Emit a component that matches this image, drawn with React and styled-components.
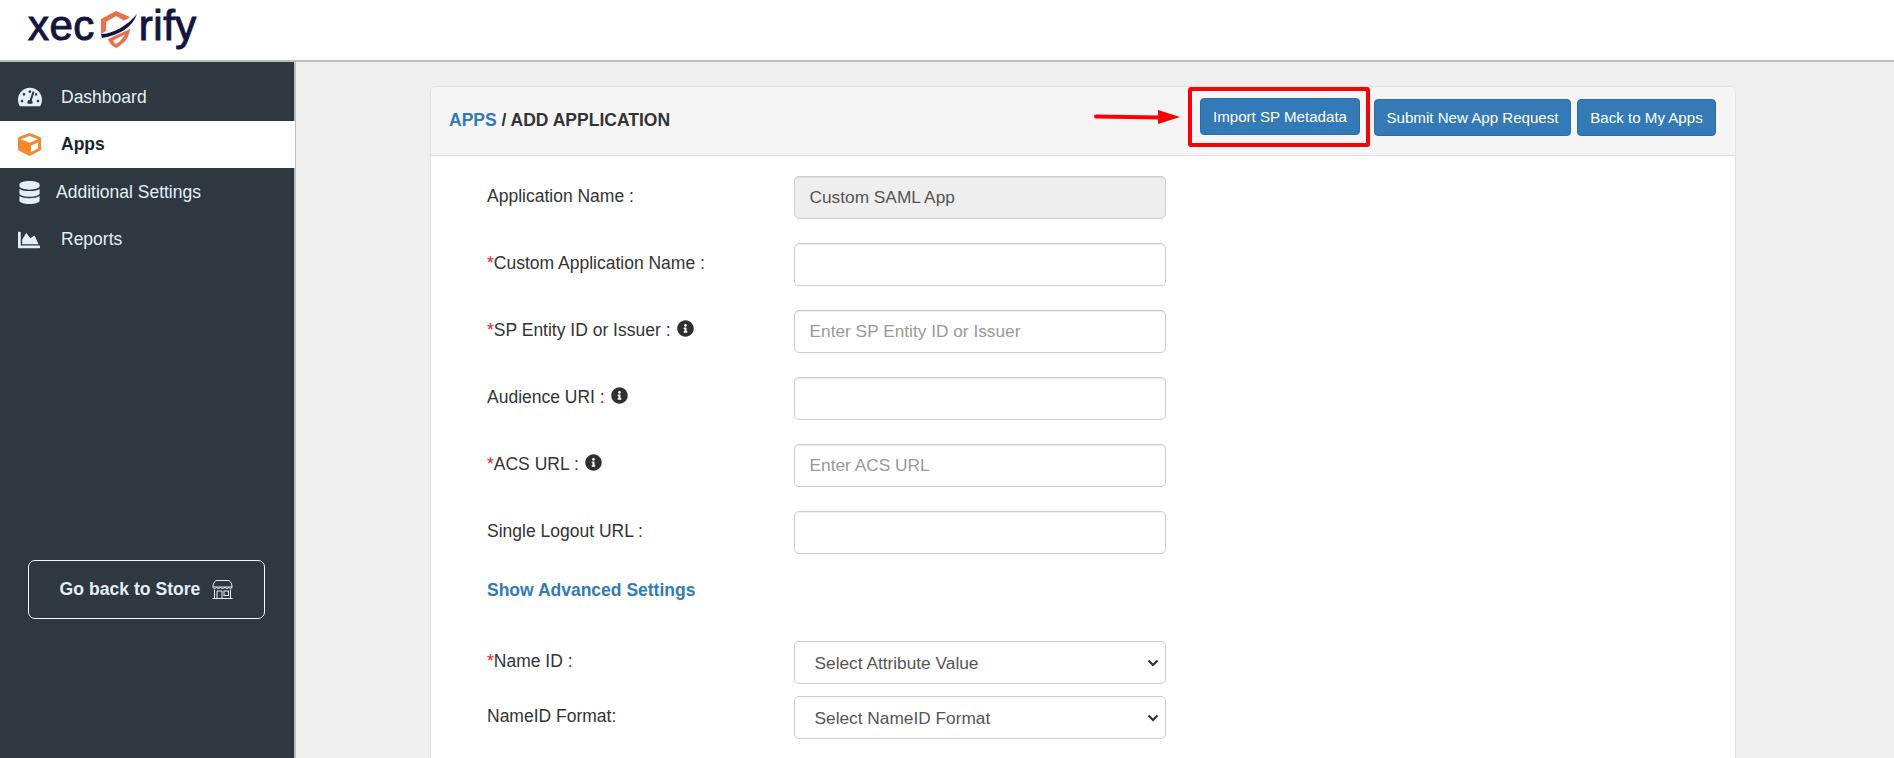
import React from 'react'
import styled, { createGlobalStyle } from 'styled-components'
import { FaTachometerAlt, FaCube, FaDatabase, FaChartArea, FaInfoCircle } from 'react-icons/fa'

const GlobalStyle = createGlobalStyle`
  html, body {
    margin: 0;
    height: 100%;
    overflow: hidden;
    background: #efefef;
    font-family: "Liberation Sans", Arial, sans-serif;
    color: #333;
  }
  * {
    box-sizing: border-box;
  }
`

const chevron = "url(\"data:image/svg+xml,%3Csvg xmlns='http://www.w3.org/2000/svg' width='12' height='8' viewBox='0 0 12 8'%3E%3Cpath d='M1.5 1.5 L6 6 L10.5 1.5' fill='none' stroke='%23333' stroke-width='2.2'/%3E%3C/svg%3E\")"

const Page = styled.div`
  height: 758px;
  display: flex;
  flex-direction: column;
  overflow: hidden;
`

const TopBar = styled.header`
  height: 62px;
  flex: none;
  background: #fff;
  display: flex;
  align-items: center;
  padding: 0 0 2px 28px;
  border-bottom: 2px solid #bdbdbd;
`

const Logo = styled.div`
  display: flex;
  align-items: center;
  font-family: "Liberation Sans", Arial, sans-serif;
  font-size: 42px;
  line-height: 1;
  color: #14153f;
  -webkit-text-stroke: 1px #14153f;
  svg {
    margin-left: 4px;
  }
`

const LogoWord = styled.span`
  position: relative;
  top: -3px;
  letter-spacing: 0.5px;
`

const Body = styled.div`
  flex: 1;
  display: grid;
  grid-template-columns: 296px 1fr;
  min-height: 0;
`

const Sidebar = styled.aside`
  background: #2f3740;
  padding-top: 11px;
  border-right: 2px solid #bdbdbd;
`

const NavItem = styled.a`
  height: 47.5px;
  display: flex;
  align-items: center;
  padding: 1px 0 0 18px;
  margin-right: -1px;
  font-size: 17.5px;
  font-weight: ${p => (p.$active ? 700 : 400)};
  color: ${p => (p.$active ? '#1c2431' : '#e2f0f5')};
  background: ${p => (p.$active ? '#fff' : 'transparent')};
`

const NavIcon = styled.span`
  width: ${p => p.$width || 43}px;
  display: flex;
  align-items: center;
  color: ${p => (p.$active ? '#f5892a' : '#e2f0f5')};
`

const StoreButton = styled.a`
  margin: 297px 29px 0 28px;
  height: 59px;
  display: flex;
  align-items: center;
  justify-content: center;
  gap: 12px;
  border: 1px solid #f4f8fa;
  border-radius: 7px;
  color: #e2f0f5;
  font-size: 17.6px;
  font-weight: 700;
`

const Main = styled.main`
  padding: 24px 158px 0 134px;
  min-width: 0;
`

const Card = styled.section`
  background: #fff;
  border: 1px solid #e2e2e2;
  border-radius: 6px 6px 0 0;
  padding-bottom: 40px;
`

const CardHeader = styled.div`
  height: 69px;
  background: #f5f5f5;
  border-bottom: 1px solid #ddd;
  border-radius: 6px 6px 0 0;
  display: flex;
  align-items: center;
  justify-content: space-between;
  padding: 0 19px 0 18px;
`

const Title = styled.h1`
  margin: 0 0 2px;
  font-size: 17.5px;
  font-weight: 700;
  color: #333;
  span {
    color: #337ab7;
  }
`

const Actions = styled.div`
  display: flex;
  align-items: center;
  padding-bottom: 8px;
`

const Arrow = styled.svg`
  margin-right: 8px;
  flex: none;
`

const Highlight = styled.div`
  width: 182px;
  height: 60px;
  border: 4px solid #fb0007;
  border-radius: 3px;
  margin-right: 4px;
  display: flex;
  align-items: center;
  padding: 0 0 1px 8px;
`

const Button = styled.button`
  height: 37px;
  padding: 0;
  width: ${p => p.$width}px;
  margin-left: ${p => p.$left || 0}px;
  background: #337ab7;
  border: 1px solid #2e6da4;
  border-radius: 4px;
  color: #fff;
  font-family: inherit;
  font-size: 15.1px;
  white-space: nowrap;
`

const Form = styled.form`
  padding: 20px 0 0 56px;
  display: flex;
  flex-direction: column;
`

const Row = styled.div`
  display: grid;
  grid-template-columns: 306.5px 372px;
  align-items: center;
  height: 43px;
  margin-bottom: ${p => p.$gap ?? 24}px;
`

const Label = styled.label`
  font-size: 17.5px;
  color: #333;
  display: flex;
  align-items: center;
  padding-bottom: 2px;
  svg {
    margin: -4px 0 0 6px;
    color: #2f2f2f;
  }
`

const Required = styled.span`
  color: #e8212b;
`

const Input = styled.input`
  height: 43px;
  width: 100%;
  padding: 0 15px;
  border: 1px solid #ccc;
  border-radius: 5px;
  background: ${p => (p.disabled ? '#eee' : '#fff')};
  color: #555;
  opacity: 1;
  font-family: inherit;
  font-size: 17.3px;
  box-shadow: inset 0 1px 1px rgba(0, 0, 0, 0.075);
  &::placeholder {
    color: #999;
  }
`

const Select = styled.select`
  height: 43px;
  width: 100%;
  padding: 0 20px;
  border: 1px solid #ccc;
  border-radius: 5px;
  appearance: none;
  background: #fff ${chevron} no-repeat right 6px center;
  color: #555;
  font-family: inherit;
  font-size: 17.3px;
`

const ToggleLink = styled.a`
  font-size: 17.5px;
  font-weight: 700;
  color: #337ab7;
  line-height: 20px;
  margin: 2px 0 41px;
`

const Shield = () => (
  <svg width="40" height="39" viewBox="0 0 40 39">
    <path d="M2 9 L17 1 L31 7 L25 10.5 L17 6 L7 12 L7 21 L2 24 Z" fill="#e9704a" />
    <path d="M9 29 L31 19 C30 28 25 34 17 38 C13 36 10 33 9 29 Z M14 30.5 C15 32.5 16 33.5 17 34 C21 32 24 28 26 24.5 Z" fill="#e9704a" fillRule="evenodd" />
    <path d="M2 24 C14 24 28 16 38 4 C33 18 20 25 3 28 Z" fill="#14153f" />
  </svg>
)

const StoreIcon = () => (
  <svg width="21" height="21" viewBox="0 0 21 21" fill="none" stroke="#e2f0f5" strokeWidth="1">
    <path d="M4 1.5 H17 C19 3 20 5 20 8 C20 10 17 10 16.8 8 C16.6 10 13 10 13 8 C12.8 10 8.5 10 8.3 8 C8 10 4.5 10 4.3 8 C4 10 1 10 1 8 C1 5 2 3 4 1.5 Z" />
    <path d="M1 8 H20" />
    <path d="M2.5 10.5 V19.5 M18.5 10.5 V19.5 M0.5 19.5 H20.5" />
    <path d="M5 19.5 V12 H10 V19.5" />
    <rect x="12" y="12" width="4.5" height="4.5" />
  </svg>
)

const rows = [
  { label: 'SP Entity ID or Issuer :', required: true, info: true, placeholder: 'Enter SP Entity ID or Issuer' },
  { label: 'Audience URI :', info: true },
  { label: 'ACS URL :', required: true, info: true, placeholder: 'Enter ACS URL' },
  { label: 'Single Logout URL :' },
]

const App = () => {
  return (
    <Page>
      <GlobalStyle />
      <TopBar>
        <Logo>
          <LogoWord>xec</LogoWord>
          <Shield />
          <LogoWord>rify</LogoWord>
        </Logo>
      </TopBar>
      <Body>
        <Sidebar>
          <NavItem>
            <NavIcon><FaTachometerAlt size={24} /></NavIcon>
            Dashboard
          </NavItem>
          <NavItem $active>
            <NavIcon $active><FaCube size={23} /></NavIcon>
            Apps
          </NavItem>
          <NavItem>
            <NavIcon $width={38}><FaDatabase size={23} /></NavIcon>
            Additional Settings
          </NavItem>
          <NavItem>
            <NavIcon><FaChartArea size={22} /></NavIcon>
            Reports
          </NavItem>
          <StoreButton>
            Go back to Store
            <StoreIcon />
          </StoreButton>
        </Sidebar>
        <Main>
          <Card>
            <CardHeader>
              <Title><span>APPS</span> / ADD APPLICATION</Title>
              <Actions>
                <Arrow width="86" height="16" viewBox="0 0 86 16">
                  <path d="M2 7.5 L66 8.5" stroke="#fb0007" strokeWidth="4" strokeLinecap="round" />
                  <path d="M64 1 L86 8 L64 15 Z" fill="#fb0007" />
                </Arrow>
                <Highlight>
                  <Button $width={160}>Import SP Metadata</Button>
                </Highlight>
                <Button $width={197}>Submit New App Request</Button>
                <Button $width={139} $left={6}>Back to My Apps</Button>
              </Actions>
            </CardHeader>
            <Form>
              <Row>
                <Label>Application Name :</Label>
                <Input disabled value="Custom SAML App" readOnly />
              </Row>
              <Row>
                <Label><Required>*</Required>Custom Application Name :</Label>
                <Input />
              </Row>
              {rows.map((r) => (
                <Row key={r.label}>
                  <Label>
                    {r.required && <Required>*</Required>}
                    {r.label}
                    {r.info && <FaInfoCircle size={17} />}
                  </Label>
                  <Input placeholder={r.placeholder} />
                </Row>
              ))}
              <ToggleLink>Show Advanced Settings</ToggleLink>
              <Row $gap={12}>
                <Label><Required>*</Required>Name ID :</Label>
                <Select defaultValue="attr">
                  <option value="attr">Select Attribute Value</option>
                </Select>
              </Row>
              <Row>
                <Label>NameID Format:</Label>
                <Select defaultValue="fmt">
                  <option value="fmt">Select NameID Format</option>
                </Select>
              </Row>
            </Form>
          </Card>
        </Main>
      </Body>
    </Page>
  )
}

export default App
